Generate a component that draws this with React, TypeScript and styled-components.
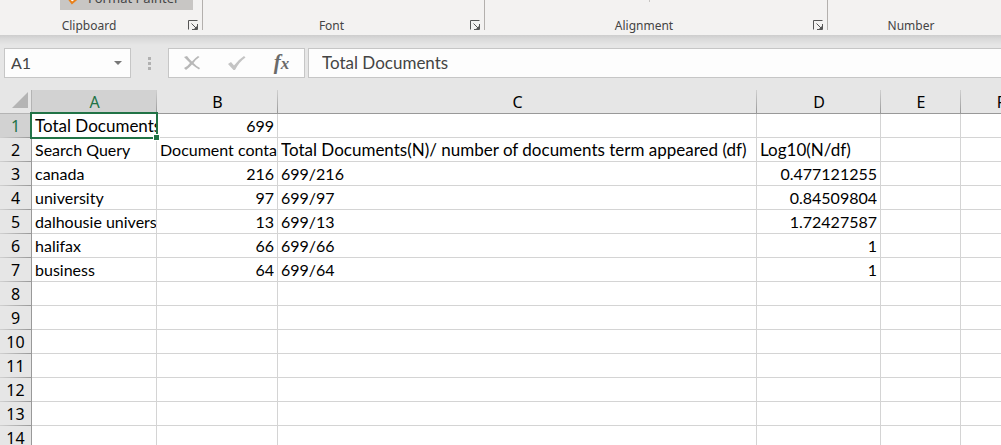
import React from "react";
import styled, { createGlobalStyle, css } from "styled-components";

const UI = `"Noto Sans", "Open Sans", sans-serif`;
const SHEET = `Lato, "Liberation Sans", sans-serif`;

const Global = createGlobalStyle`
  * { box-sizing: border-box; }
  body { margin: 0; background: #e6e6e6; overflow: hidden; }
  button, input { font: inherit; color: inherit; margin: 0; padding: 0; border: 0; background: none; border-radius: 0; outline: none; }
`;

const Window = styled.div`
  display: flex;
  flex-direction: column;
  height: 100vh;
  overflow: hidden;
  font-family: ${UI};
`;

const Ribbon = styled.header`
  display: flex;
  flex-shrink: 0;
  overflow: hidden;
  background: #f3f2f1;
  padding-bottom: 5px;
`;

const Group = styled.section<{ $width: number }>`
  flex: 0 0 ${(p) => p.$width}px;
  border-right: 1px solid #b3b0ad;
`;

const GroupBody = styled.div<{ $inset?: number }>`
  display: flex;
  align-items: flex-end;
  height: 10px;
  padding-left: ${(p) => p.$inset ?? 0}px;
  overflow: hidden;
`;

const PainterButton = styled.button`
  display: flex;
  align-items: center;
  gap: 8px;
  width: 133px;
  height: 24px;
  padding: 0 8px 0 6px;
  background: #c8c6c4;
  color: #444;
  font-size: 13px;
  line-height: 20px;
  white-space: nowrap;
`;

const ShortRule = styled.span`
  width: 1px;
  height: 2px;
  align-self: flex-start;
  background: #c8c6c4;
`;

const GroupFooter = styled.div`
  display: grid;
  grid-template-columns: 1fr 24px;
  height: 20px;
  padding-top: 8px;
`;

const GroupLabel = styled.span`
  text-align: center;
  color: #444;
  font-size: 12px;
  line-height: 16px;
`;

const Launcher = styled.button`
  display: flex;
  align-items: flex-start;
  justify-content: flex-end;
  padding: 2px 4px 0 0;
`;

const FormulaBar = styled.div`
  display: flex;
  flex-shrink: 0;
  height: 55px;
  padding: 13px 0 12px 4px;
  background: linear-gradient(#cdcdcd, #dadada 4px, #e6e6e6 10px);
`;

const Box = styled.div`
  display: flex;
  align-items: center;
  background: #fdfdfd;
  border: 1px solid #c6c6c6;
  color: #444;
  font-family: ${SHEET};
  font-size: 17px;
  input { flex: 1; min-width: 0; padding-bottom: 1px; }
`;

const NameBox = styled(Box)`
  width: 127px;
  font-size: 16px;
  input { padding-left: 6px; }
  button { display: flex; align-items: center; justify-content: center; width: 24px; height: 100%; }
`;

const Grip = styled.div`
  display: flex;
  flex-direction: column;
  align-items: center;
  justify-content: center;
  gap: 2px;
  width: 37px;
  i { width: 3px; height: 3px; background: #b1b1b1; }
`;

const Actions = styled(Box)`
  width: 137px;
  button { display: flex; align-items: center; justify-content: center; flex: 1; height: 100%; }
`;

const FunctionMark = styled.span`
  color: #6a6a6a;
  font: italic 700 21px/20px "Liberation Serif", serif;
  small { font-size: 17px; }
`;

const FormulaField = styled(Box)`
  flex: 1;
  margin-left: 3px;
  border-right: 0;
  input { padding-left: 13px; }
`;

const SheetArea = styled.main`
  flex: 1;
  min-height: 0;
  overflow: hidden;
  background: #fff;
`;

const Table = styled.table`
  table-layout: fixed;
  width: 1041px;
  border-collapse: separate;
  border-spacing: 0;
  font-size: 16px;
  line-height: 22px;
`;

const headerCell = css`
  padding: 0;
  font-weight: 400;
  text-align: center;
  font-family: ${UI};
  color: #000;
`;

const Corner = styled.td`
  height: 24px;
  padding: 0 3px 3px 0;
  background: #e6e6e6;
  border-right: 1px solid #b4b4b4;
  border-bottom: 1px solid #b4b4b4;
  svg { display: block; margin-left: auto; }
`;

const ColumnHead = styled.th<{ $active?: boolean }>`
  ${headerCell}
  height: 24px;
  border-bottom: 1px solid #999;
  background:
    linear-gradient(#d0d0d0, #999) right / 1px 100% no-repeat,
    ${(p) => (p.$active ? "#d2d2d2" : "#e6e6e6")};
  ${(p) => p.$active && "color: #217346;"}
`;

const RowHead = styled.th<{ $active?: boolean }>`
  ${headerCell}
  height: 24px;
  border-right: 1px solid #999;
  background:
    linear-gradient(90deg, #d0d0d0, #999) bottom / 100% 1px no-repeat,
    ${(p) => (p.$active ? "#d2d2d2" : "#e6e6e6")};
  ${(p) => p.$active && "color: #217346;"}
`;

const Cell = styled.td<{ $numeric?: boolean; $large?: boolean }>`
  position: relative;
  height: 24px;
  padding: 1px ${(p) => (p.$numeric ? 3 : 0)}px 0 3px;
  border-right: 1px solid #d4d4d4;
  border-bottom: 1px solid #d4d4d4;
  background: #fff;
  color: #000;
  font-family: ${SHEET};
  font-size: ${(p) => (p.$large ? 17 : 16)}px;
  text-align: ${(p) => (p.$numeric ? "right" : "left")};
`;

const CellText = styled.div`
  overflow: hidden;
  white-space: nowrap;
`;

const Selection = styled.div`
  position: absolute;
  inset: -2px;
  border: 2px solid #217346;
  z-index: 1;
  &::after {
    content: "";
    position: absolute;
    right: -3px;
    bottom: -3px;
    width: 5px;
    height: 5px;
    background: #217346;
    box-shadow: 0 0 0 1px #fff;
  }
`;

const columns = [
  { name: "A", width: 125 },
  { name: "B", width: 121 },
  { name: "C", width: 479 },
  { name: "D", width: 124 },
  { name: "E", width: 80 },
  { name: "F", width: 80 },
];

const data: (string | number)[][] = [
  ["Total Documents", 699],
  ["Search Query", "Document containing term", "Total Documents(N)/ number of documents term appeared (df)", "Log10(N/df)"],
  ["canada", 216, "699/216", 0.477121255],
  ["university", 97, "699/97", 0.84509804],
  ["dalhousie university", 13, "699/13", 1.72427587],
  ["halifax", 66, "699/66", 1],
  ["business", 64, "699/64", 1],
];

// Cells set one size larger than the sheet's default.
const largeCells = ["A1", "C2", "D2"];

const ROWS = 14;

function RibbonGroup({ label, width, inset, children }: { label: string; width: number; inset?: number; children?: React.ReactNode }) {
  return (
    <Group $width={width} aria-label={label}>
      <GroupBody $inset={inset}>{children}</GroupBody>
      <GroupFooter>
        <GroupLabel>{label}</GroupLabel>
        <Launcher aria-label={`${label} settings`}>
          <svg width="10" height="10" viewBox="0 0 10 10" fill="none" stroke="#555">
            <path d="M0.5 9.500V0.500H9.500M3.500 3.500L9 9M9.500 4V9.500H4" />
            <path d="M9 6V9H6Z" fill="#555" stroke="none" />
          </svg>
        </Launcher>
      </GroupFooter>
    </Group>
  );
}

export default function App() {
  return (
    <Window>
      <Global />
      <Ribbon>
        <RibbonGroup label="Clipboard" width={203} inset={60}>
          <PainterButton>
            <svg width="14" height="16" viewBox="0 0 14 16" fill="#fff" stroke="#e8821e" strokeWidth="2">
              <path d="M2 8L8 2L12 8L6 13Z" />
            </svg>
            Format Painter
          </PainterButton>
        </RibbonGroup>
        <RibbonGroup label="Font" width={282} />
        <RibbonGroup label="Alignment" width={343} inset={164}>
          <ShortRule />
        </RibbonGroup>
        <RibbonGroup label="Number" width={191} />
      </Ribbon>

      <FormulaBar>
        <NameBox>
          <input aria-label="Name box" defaultValue="A1" />
          <button aria-label="Show names">
            <svg width="8" height="4" viewBox="0 0 8 4" fill="#777"><path d="M0 0H8L4 4Z" /></svg>
          </button>
        </NameBox>
        <Grip><i /><i /><i /></Grip>
        <Actions>
          <button aria-label="Cancel">
            <svg width="16" height="14" viewBox="0 0 16 14" fill="#b8b8b8">
              <path d="M0 1L3 0Q5 3 8 5.500Q11 2 14 0L15.500 1Q11 4 9.500 7Q12 10 16 12L15 13.500Q11 11 8 8.500Q6 11 2 14L0 12Q4 10 6 7Q3 4 0 1Z" />
            </svg>
          </button>
          <button aria-label="Enter">
            <svg width="18" height="14" viewBox="0 0 18 14" fill="#c4c4c4">
              <path d="M0 8L3 6L6 9.500Q10 4 16 0L17.500 1.500Q11 6 7 14H5.500Z" />
            </svg>
          </button>
          <button aria-label="Insert function">
            <FunctionMark>f<small>x</small></FunctionMark>
          </button>
        </Actions>
        <FormulaField>
          <input aria-label="Formula bar" defaultValue="Total Documents" />
        </FormulaField>
      </FormulaBar>

      <SheetArea>
        <Table>
          <colgroup>
            <col width={32} />
            {columns.map((c) => <col key={c.name} width={c.width} />)}
          </colgroup>
          <thead>
            <tr>
              <Corner>
                <svg width="16" height="16" viewBox="0 0 16 16" fill="#b4b4b4"><path d="M16 0V16H0Z" /></svg>
              </Corner>
              {columns.map((c, i) => (
                <ColumnHead key={c.name} scope="col" $active={i === 0}>{c.name}</ColumnHead>
              ))}
            </tr>
          </thead>
          <tbody>
            {Array.from({ length: ROWS }, (_, r) => (
              <tr key={r}>
                <RowHead scope="row" $active={r === 0}>{r + 1}</RowHead>
                {columns.map((c, i) => {
                  const value = data[r]?.[i];
                  return (
                    <Cell key={c.name} $numeric={typeof value === "number"} $large={largeCells.includes(`${c.name}${r + 1}`)}>
                      {value !== undefined && <CellText>{value}</CellText>}
                      {r === 0 && i === 0 && <Selection />}
                    </Cell>
                  );
                })}
              </tr>
            ))}
          </tbody>
        </Table>
      </SheetArea>
    </Window>
  );
}
